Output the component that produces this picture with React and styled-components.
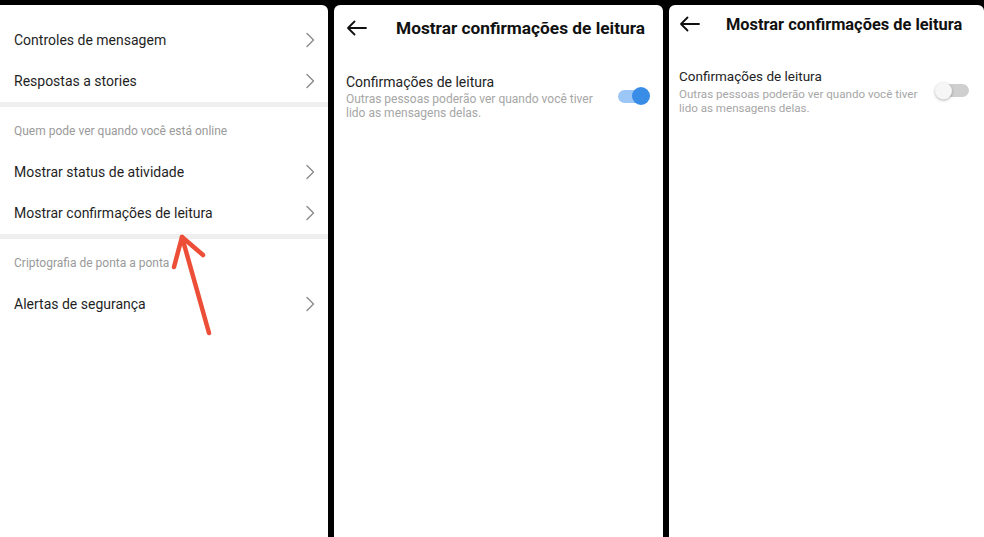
import React from 'react'
import styled, { createGlobalStyle } from 'styled-components'

const GlobalStyle = createGlobalStyle`
    html, body {
        margin: 0;
        padding: 0;
        background: #000;
        font-family: Roboto, "Noto Sans", "Liberation Sans", sans-serif;
    }
`

const menu = [
    { type: 'row', text: 'Controles de mensagem' },
    { type: 'row', text: 'Respostas a stories' },
    { type: 'sep' },
    { type: 'head', text: 'Quem pode ver quando você está online' },
    { type: 'row', text: 'Mostrar status de atividade' },
    { type: 'row', text: 'Mostrar confirmações de leitura' },
    { type: 'sep' },
    { type: 'head', text: 'Criptografia de ponta a ponta' },
    { type: 'row', text: 'Alertas de segurança' },
]

function Chevron() {
    return (
        <svg width="10" height="16" viewBox="0 0 10 16">
            <polyline points="2,1.5 8.5,8 2,14.5" fill="none" stroke="#8a8a8a" strokeWidth="1.4" strokeLinecap="round" strokeLinejoin="round" />
        </svg>
    )
}

function BackArrow() {
    return (
        <svg width="21" height="16" viewBox="0 0 21 16">
            <path d="M20 8H2M8.5 1.5L2 8l6.5 6.5" fill="none" stroke="#111" strokeWidth="1.8" strokeLinecap="round" strokeLinejoin="round" />
        </svg>
    )
}

function SettingsList() {
    return (
        <MenuPanel>
            {menu.map((item, i) => {
                if (item.type === 'sep') return <Separator key={i} />
                if (item.type === 'head') return <SectionHead key={i}>{item.text}</SectionHead>
                return (
                    <Row key={i}>
                        <span>{item.text}</span>
                        <Chevron />
                    </Row>
                )
            })}
            <Annotation viewBox="0 0 328 532">
                <g fill="none" stroke="#ec4e38" strokeWidth="4.5" strokeLinecap="round" strokeLinejoin="round">
                    <path d="M209 328 L182 232" />
                    <path d="M174 262 L182 232 L203 250" />
                </g>
            </Annotation>
        </MenuPanel>
    )
}

function ReadReceipts({ compact, on }) {
    return (
        <DetailPanel compact={compact}>
            <Header compact={compact}>
                <BackArrow />
                <Title compact={compact}>Mostrar confirmações de leitura</Title>
            </Header>
            <Setting compact={compact}>
                <SettingText>
                    <Label compact={compact}>Confirmações de leitura</Label>
                    <Desc compact={compact}>
                        Outras pessoas poderão ver quando você tiver lido as mensagens delas.
                    </Desc>
                </SettingText>
                <Switch on={on}>
                    <Knob on={on} />
                </Switch>
            </Setting>
        </DetailPanel>
    )
}

export default function App() {
    return (
        <>
            <GlobalStyle />
            <Screen>
                <SettingsList />
                <ReadReceipts on />
                <ReadReceipts compact />
            </Screen>
        </>
    )
}

const Screen = styled.div`
    display: flex;
    gap: 6px;
    padding-top: 5px;
    height: 537px;
    width: 984px;
    box-sizing: border-box;
    background: #000;
    overflow: hidden;
`

const BasePanel = styled.div`
    background: #fff;
    border-radius: 6px 6px 0 0;
    box-sizing: border-box;
    height: 100%;
    flex-shrink: 0;
`

const MenuPanel = styled(BasePanel)`
    position: relative;
    width: 328px;
    padding-top: 14px;
    border-radius: 0 6px 0 0;
`

const Row = styled.div`
    display: flex;
    align-items: center;
    justify-content: space-between;
    height: 41.5px;
    padding: 0 13px 0 14px;
    font-size: 14px;
    color: #1f1f1f;
`

const Separator = styled.div`
    height: 5px;
    background: #efefef;
`

const SectionHead = styled.div`
    display: flex;
    align-items: center;
    height: 44px;
    padding: 3px 0 0 14px;
    box-sizing: border-box;
    font-size: 12px;
    color: #9a9a9a;
`

const Annotation = styled.svg`
    position: absolute;
    inset: 0;
    width: 328px;
    height: 532px;
    pointer-events: none;
`

const DetailPanel = styled(BasePanel)`
    width: ${p => (p.compact ? '315px' : '329px')};
    padding: ${p => (p.compact ? '0 15px 0 10px' : '0 15px 0 12px')};
`

const Header = styled.div`
    display: flex;
    align-items: center;
    height: ${p => (p.compact ? '38px' : '46px')};
    gap: ${p => (p.compact ? '26px' : '29px')};
`

const Title = styled.div`
    font-size: ${p => (p.compact ? '16.4px' : '17.3px')};
    font-weight: 700;
    color: #111;
    white-space: nowrap;
`

const Setting = styled.div`
    display: flex;
    align-items: center;
    justify-content: space-between;
    padding-top: ${p => (p.compact ? '25px' : '23px')};
`

const SettingText = styled.div`
    display: flex;
    flex-direction: column;
`

const Label = styled.div`
    font-size: ${p => (p.compact ? '13.5px' : '14px')};
    color: #232323;
    line-height: 16px;
    margin-bottom: ${p => (p.compact ? '3px' : '2px')};
`

const Desc = styled.div`
    font-size: ${p => (p.compact ? '11.6px' : '12px')};
    line-height: 14px;
    color: #a6a6a6;
    width: ${p => (p.compact ? '245px' : '255px')};
`

const Switch = styled.div`
    position: relative;
    width: 30px;
    height: 13px;
    border-radius: 7px;
    background: ${p => (p.on ? '#9cc6f6' : '#cfcfcf')};
    flex-shrink: 0;
    margin-top: -2px;
`

const Knob = styled.div`
    position: absolute;
    top: 50%;
    width: ${p => (p.on ? '18px' : '17px')};
    height: ${p => (p.on ? '18px' : '17px')};
    border-radius: 50%;
    transform: translateY(-50%);
    left: ${p => (p.on ? '14px' : '-4px')};
    background: ${p => (p.on ? '#3a8de6' : '#f6f6f6')};
    box-shadow: ${p => (p.on ? 'none' : '0 1px 3px rgba(0,0,0,0.3)')};
`
